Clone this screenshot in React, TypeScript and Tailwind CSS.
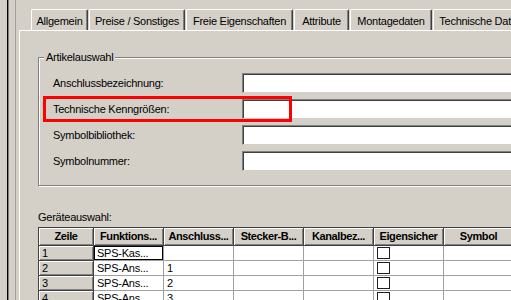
import React from "react";

const tabs = [
  { label: "Allgemein", w: "w-[57px]" },
  { label: "Preise / Sonstiges", w: "w-[96px]" },
  { label: "Freie Eigenschaften", w: "w-[107px]" },
  { label: "Attribute", w: "w-[55px]" },
  { label: "Montagedaten", w: "w-[82px]" },
  { label: "Technische Daten", w: "w-[96px]" },
];

const fields = [
  "Anschlussbezeichnung:",
  "Technische Kenngrößen:",
  "Symbolbibliothek:",
  "Symbolnummer:",
];

const columns = [
  "Zeile",
  "Funktions...",
  "Anschluss...",
  "Stecker-B...",
  "Kanalbez...",
  "Eigensicher",
  "Symbol",
];

const rows = [
  { nr: "1", funktion: "SPS-Kas...", anschluss: "" },
  { nr: "2", funktion: "SPS-Ans...", anschluss: "1" },
  { nr: "3", funktion: "SPS-Ans...", anschluss: "2" },
  { nr: "4", funktion: "SPS-Ans...", anschluss: "3" },
];

const raised =
  "bg-[#d4d0c8] border-r border-b border-[#404040] shadow-[inset_1px_1px_0_#ffffff,inset_-1px_-1px_0_#808080]";

export default function App() {
  return (
    <div className="w-[511px] h-[300px] bg-[#d4d0c8] flex overflow-hidden relative text-[11px] tracking-[-0.25px] text-black font-['Liberation_Sans',Arial,sans-serif] leading-[13px]">
      {/* window edge */}
      <div className="w-[7px] shrink-0" />
      <div className="w-[1px] shrink-0 bg-black" />
      <div className="w-[1px] shrink-0 bg-[#808080]" />
      <div className="w-[6px] shrink-0" />
      <div className="w-[1px] shrink-0 bg-[#a0a0a0]" />
      <div className="w-[3px] shrink-0" />

      {/* tab control */}
      <div className="flex flex-col flex-1 min-w-0">
        <div className="h-[30px] pt-[9px] pl-[12px] flex shrink-0">
          {tabs.map((t) => (
            <div
              key={t.label}
              className={`${t.w} shrink-0 h-[21px] mr-[1px] pt-[2px] flex items-center justify-center whitespace-nowrap border-t border-l border-white border-r border-r-[#404040] rounded-t-[2px] shadow-[inset_-1px_0_0_#808080]`}
            >
              {t.label}
            </div>
          ))}
        </div>

        <div className="flex-1 border-t border-l border-white">
          {/* Artikelauswahl */}
          <div className="ml-[18px] mt-[26px] w-[500px] h-[129px] border border-[#808080] shadow-[inset_1px_1px_0_#ffffff,1px_1px_0_#ffffff] relative pt-[15px] pl-[14px]">
            <div className="absolute -top-[7px] left-[5px] px-[2px] bg-[#d4d0c8]">
              Artikelauswahl
            </div>
            {fields.map((f) => (
              <div key={f} className="flex items-center h-[20px] mb-[6px]">
                <div className="w-[189px] shrink-0">{f}</div>
                <div className="flex-1 h-[20px] bg-white border border-t-[#808080] border-l-[#808080] border-r-white border-b-[#d4d0c8] shadow-[inset_1px_1px_0_#404040]" />
              </div>
            ))}
          </div>

          {/* Geräteauswahl */}
          <div className="ml-[18px] mt-[25px] mb-[3px]">Geräteauswahl:</div>
          <div className="ml-[18px] w-[500px] border-t border-l border-[#404040]">
            <div className="grid grid-cols-[55px_70px_70px_70px_70px_70px_70px] h-[18px]">
              {columns.map((c) => (
                <div
                  key={c}
                  className={`${raised} font-bold tracking-[-0.4px] flex items-center justify-center whitespace-nowrap overflow-hidden`}
                >
                  {c}
                </div>
              ))}
            </div>
            {rows.map((r, i) => (
              <div
                key={r.nr}
                className="grid grid-cols-[55px_70px_70px_70px_70px_70px_70px] h-[15px]"
              >
                <div className={`${raised} pl-[3px] flex items-center`}>
                  {r.nr}
                </div>
                <div
                  className={`bg-white border-r border-b border-[#a0a0a0] pl-[3px] flex items-center whitespace-nowrap ${
                    i === 0 ? "shadow-[inset_0_0_0_1px_#000000]" : ""
                  }`}
                >
                  {r.funktion}
                </div>
                <div className="bg-white border-r border-b border-[#a0a0a0] pl-[3px] flex items-center">
                  {r.anschluss}
                </div>
                <div className="bg-white border-r border-b border-[#a0a0a0]" />
                <div className="bg-white border-r border-b border-[#a0a0a0]" />
                <div className="bg-white border-r border-b border-[#a0a0a0] pl-[3px] pt-[1px]">
                  <div className="w-[13px] h-[12px] bg-white border border-[#202020]" />
                </div>
                <div className="bg-white border-r border-b border-[#a0a0a0]" />
              </div>
            ))}
          </div>
        </div>
      </div>

      {/* highlight marker */}
      <div className="absolute left-[43px] top-[96px] w-[249px] h-[26px] border-[3px] border-[#ff0000]" />
    </div>
  );
}
